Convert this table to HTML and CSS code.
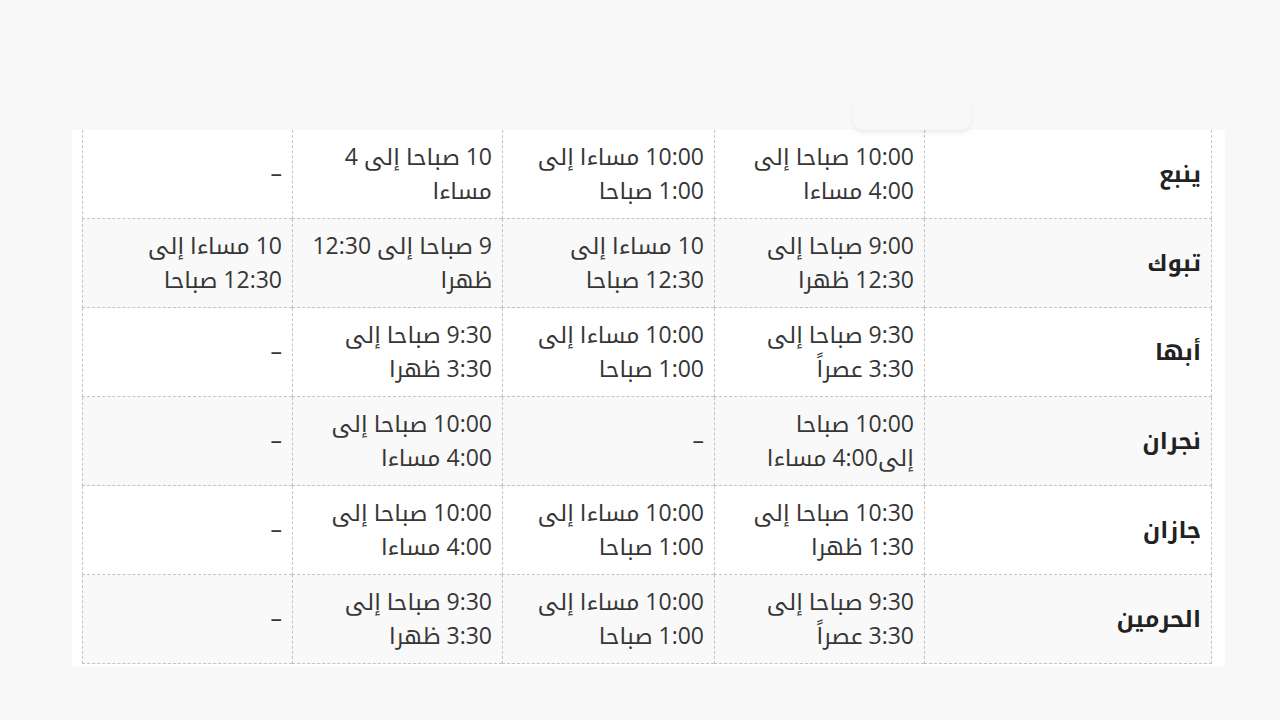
FILE: index.html
```html
<!DOCTYPE html>
<html lang="ar" dir="rtl">
<head>
<meta charset="utf-8">
<link rel="stylesheet" href="styles.css">
</head>
<body>
<div class="page">
  <div class="float-shadow"></div>
  <div class="box">
    <table class="hours">
      <colgroup>
        <col class="c-city"><col class="c-a"><col class="c-b"><col class="c-c"><col class="c-d">
      </colgroup>
      <tbody>
        <tr>
          <td class="city">ينبع</td>
          <td>10:00 صباحا إلى<br>4:00 مساءا</td>
          <td>10:00 مساءا إلى<br>1:00 صباحا</td>
          <td>10 صباحا إلى 4<br>مساءا</td>
          <td>–</td>
        </tr>
        <tr>
          <td class="city">تبوك</td>
          <td>9:00 صباحا إلى<br>12:30 ظهرا</td>
          <td>10 مساءا إلى<br>12:30 صباحا</td>
          <td>9 صباحا إلى 12:30<br>ظهرا</td>
          <td>10 مساءا إلى<br>12:30 صباحا</td>
        </tr>
        <tr>
          <td class="city">أبها</td>
          <td>9:30 صباحا إلى<br>3:30 عصراً</td>
          <td>10:00 مساءا إلى<br>1:00 صباحا</td>
          <td>9:30 صباحا إلى<br>3:30 ظهرا</td>
          <td>–</td>
        </tr>
        <tr>
          <td class="city">نجران</td>
          <td>10:00 صباحا<br>إلى4:00 مساءا</td>
          <td>–</td>
          <td>10:00 صباحا إلى<br>4:00 مساءا</td>
          <td>–</td>
        </tr>
        <tr>
          <td class="city">جازان</td>
          <td>10:30 صباحا إلى<br>1:30 ظهرا</td>
          <td>10:00 مساءا إلى<br>1:00 صباحا</td>
          <td>10:00 صباحا إلى<br>4:00 مساءا</td>
          <td>–</td>
        </tr>
        <tr>
          <td class="city">الحرمين</td>
          <td>9:30 صباحا إلى<br>3:30 عصراً</td>
          <td>10:00 مساءا إلى<br>1:00 صباحا</td>
          <td>9:30 صباحا إلى<br>3:30 ظهرا</td>
          <td>–</td>
        </tr>
      </tbody>
    </table>
  </div>
</div>
</body>
</html>
```
FILE: styles.css
```css
* { box-sizing: border-box; }
html, body { margin: 0; padding: 0; }
body {
  background: #f8f8f8;
  font-family: "Open Sans", "Noto Kufi Arabic", "Noto Sans Arabic", sans-serif;
  color: #363636;
  direction: rtl;
}
.page {
  position: relative;
  width: 1280px;
  height: 720px;
  padding-top: 130px;
  padding-right: 55px;
}
.float-shadow {
  position: absolute;
  top: 96px;
  left: 854px;
  width: 116px;
  height: 34px;
  border-radius: 8px;
  background: #f8f8f8;
  box-shadow: 0 4px 6px -2px rgba(0,0,0,0.10);
  z-index: 2;
}
.box {
  position: relative;
  width: 1153px;
  height: 537px;
  background: #fff;
  padding: 0 13px 0 10px;
  overflow: hidden;
}
.hours {
  width: 1130px;
  border-collapse: separate;
  border-spacing: 0;
  table-layout: fixed;
  direction: rtl;
  font-size: 23px;
}
.c-city { width: 288px; }
.c-a { width: 210px; }
.c-b { width: 212px; }
.c-c { width: 210px; }
.c-d { width: 210px; }
.hours td {
  padding: 9px 10px 11px;
  line-height: 34px;
  height: 89px;
  text-align: right;
  vertical-align: middle;
  border-bottom: 1px dashed #c4c4c4;
  border-left: 1px dashed #c4c4c4;
  white-space: nowrap;
}
.hours tr:first-child td { height: 88px; }
.hours td.city {
  border-right: 1px dashed #c4c4c4;
  font-weight: bold;
  font-size: 23px;
  color: #222;
}
.hours tr:nth-child(even) td { background: #f9f9f9; }
```
